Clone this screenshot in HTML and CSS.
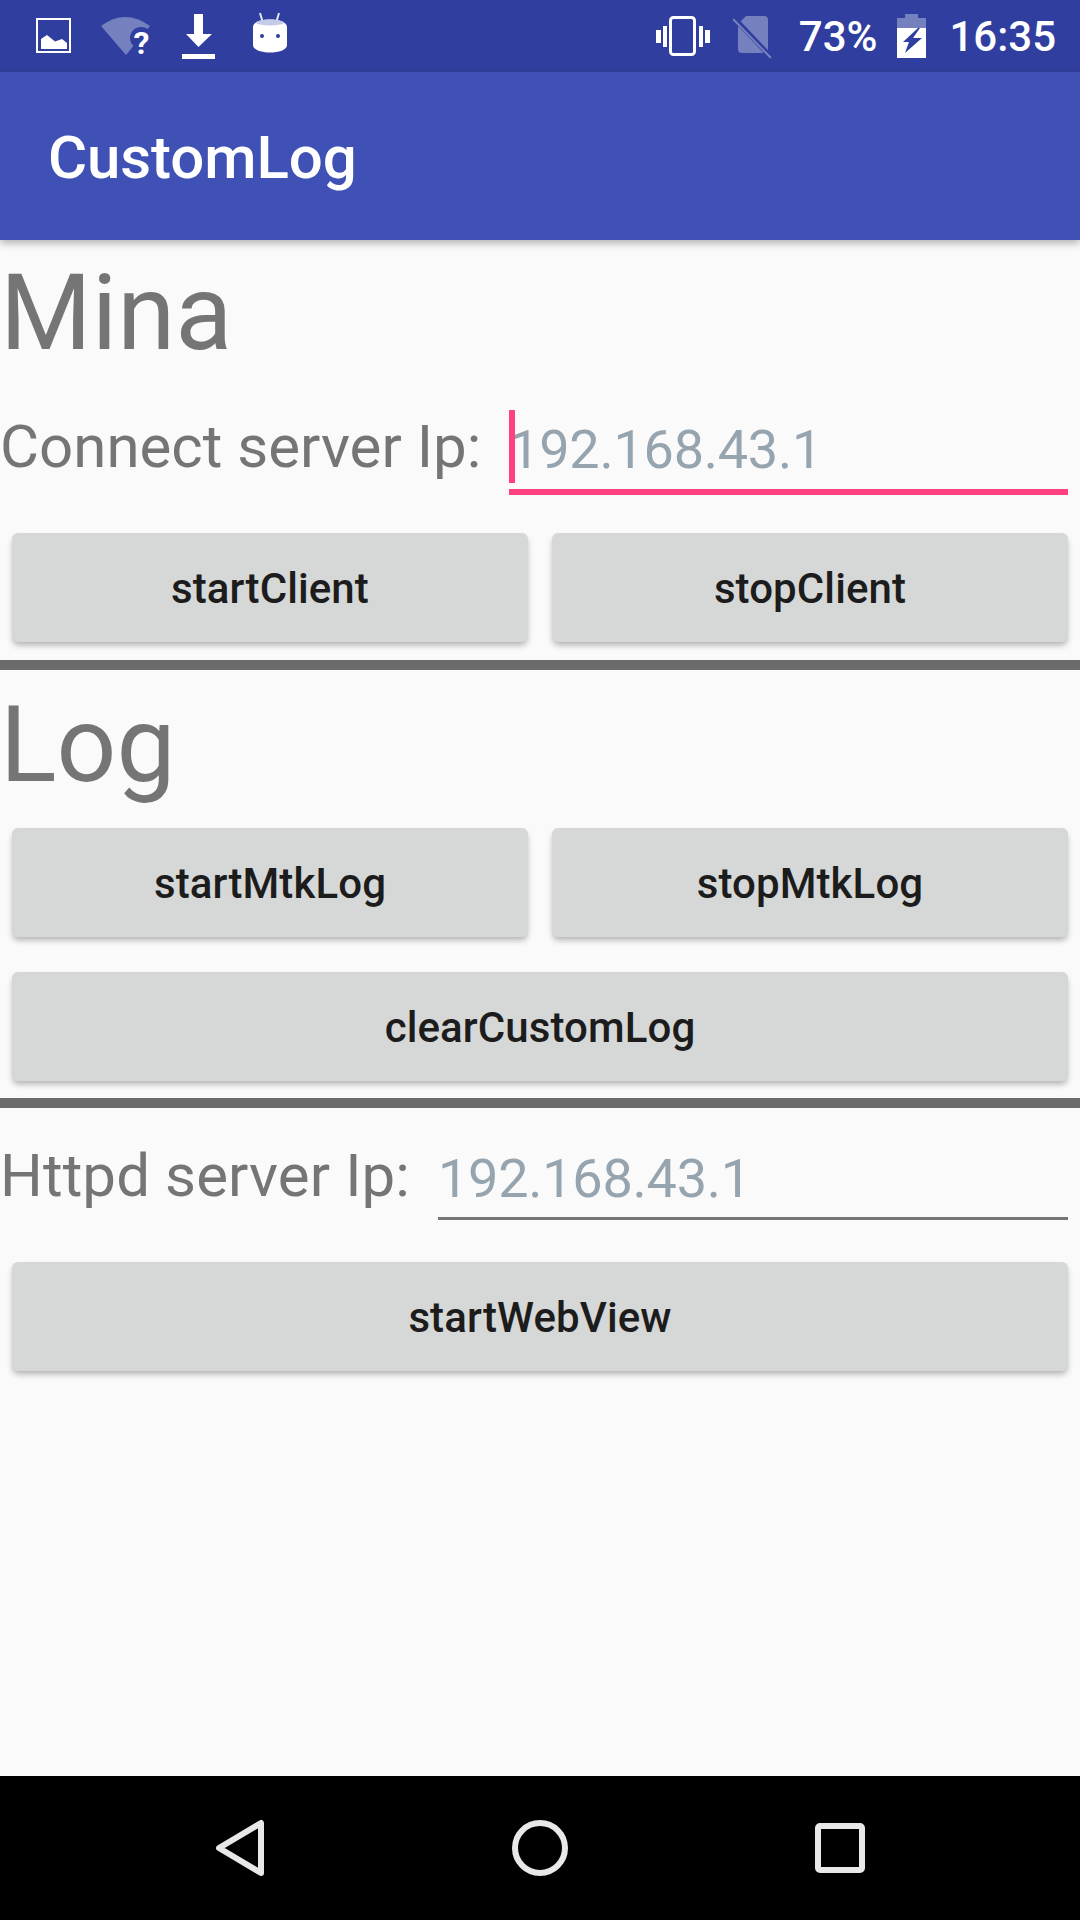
FILE: index.html
```html
<!DOCTYPE html>
<html>
<head>
<meta charset="utf-8">
<title>CustomLog</title>
<link rel="stylesheet" href="styles.css">
</head>
<body>
<div class="screen">

  <div class="statusbar">
    <div class="status-left">
      <svg class="tile" viewBox="0 0 72 72">
        <rect x="19" y="19" width="33" height="33" fill="none" stroke="#fff" stroke-width="2"/>
        <path d="M23 49V39L29 35L37 41.5L44 39L49 43V49Z" fill="#fff"/>
      </svg>
      <svg class="tile" viewBox="0 0 72 72">
        <path d="M11 26Q35 8 60 26L36 55Z" fill="#7580be"/>
        <circle cx="51" cy="38" r="11" fill="#303f9f"/>
        <rect x="48" y="38" width="20" height="20" fill="#303f9f"/>
        <text class="wifi-q" x="43.5" y="54">?</text>
      </svg>
      <svg class="tile" viewBox="0 0 72 72">
        <path d="M32 14H41V34H50L36.500 47L24 34H32Z" fill="#fff"/>
        <rect x="20" y="54" width="33" height="5" fill="#fff"/>
      </svg>
      <svg class="tile" viewBox="0 0 72 72">
        <path d="M26 13L29 23M45 13L42 23" stroke="#e3e5f3" stroke-width="2" fill="none"/>
        <path d="M19 27C19 17 53 17 53 27V45C53 55 19 55 19 45Z" fill="#fff"/>
        <ellipse cx="36" cy="22.500" rx="14" ry="3" fill="#c5cae9"/>
        <circle cx="28" cy="36" r="2" fill="#303f9f"/>
        <circle cx="44" cy="36" r="2" fill="#303f9f"/>
      </svg>
    </div>
    <div class="status-right">
      <svg class="icon-vibrate" viewBox="0 0 54 72">
        <rect x="14.500" y="17.500" width="24" height="37" rx="3" fill="none" stroke="#fff" stroke-width="3"/>
        <path d="M0 30H5V43H0ZM7 26H11V47H7ZM43 26H47V47H43ZM49 30H54V43H49Z" fill="#fff"/>
      </svg>
      <svg class="icon-sim" viewBox="0 0 40 72">
        <path d="M5 24L13 16H31Q35 16 35 20V53H9Q5 53 5 49Z" fill="#7580be"/>
        <path d="M0 17L38 57" stroke="#303f9f" stroke-width="5"/>
        <path d="M0 19L38 58" stroke="#7580be" stroke-width="2"/>
      </svg>
      <span class="percent">73%</span>
      <svg class="icon-battery" viewBox="0 0 29 72">
        <path d="M8 14H21V18H29V58H0V18H8Z" fill="#7580be"/>
        <path d="M0 28H29V58H0Z" fill="#fff"/>
        <path d="M21 28L6 42H12L8 53L25 38H16L23 28Z" fill="#303f9f"/>
      </svg>
      <span class="clock">16:35</span>
    </div>
  </div>

  <div class="appbar">CustomLog</div>

  <div class="content">
    <div class="section-title title-mina">Mina</div>
    <div class="ip-row connect-row">
      <span class="ip-label">Connect server Ip:</span>
      <div class="ip-edit focused"><span class="caret"></span>192.168.43.1</div>
    </div>
    <div class="btn-row">
      <div class="btn">startClient</div>
      <div class="btn">stopClient</div>
    </div>
    <div class="divider"></div>

    <div class="section-title title-log">Log</div>
    <div class="btn-row">
      <div class="btn">startMtkLog</div>
      <div class="btn">stopMtkLog</div>
    </div>
    <div class="btn-row next-row">
      <div class="btn">clearCustomLog</div>
    </div>
    <div class="divider divider-tight"></div>

    <div class="ip-row httpd-row">
      <span class="ip-label">Httpd server Ip:</span>
      <div class="ip-edit">192.168.43.1</div>
    </div>
    <div class="btn-row">
      <div class="btn">startWebView</div>
    </div>
  </div>

  <div class="navbar">
    <svg class="tile" viewBox="0 0 72 72">
      <path d="M57 11V61L15 36Z" fill="none" stroke="#e8e8e8" stroke-width="6" stroke-linejoin="round"/>
    </svg>
    <svg class="tile" viewBox="0 0 72 72">
      <circle cx="36" cy="36" r="25" fill="none" stroke="#e8e8e8" stroke-width="6"/>
    </svg>
    <svg class="tile" viewBox="0 0 72 72">
      <rect x="14" y="14" width="44" height="44" rx="2" fill="none" stroke="#e8e8e8" stroke-width="6"/>
    </svg>
  </div>

</div>
</body>
</html>
```

FILE: styles.css
```css
html, body {
  margin: 0;
  padding: 0;
}

body {
  font-family: Roboto, "Liberation Sans", sans-serif;
  background-color: #fafafa;
}

.screen {
  width: 1080px;
  height: 1920px;
  display: flex;
  flex-direction: column;
  overflow: hidden;
}

.tile {
  width: 72px;
  height: 72px;
  flex: none;
}

/* Status bar */
.statusbar {
  height: 72px;
  flex: none;
  display: flex;
  justify-content: space-between;
  background-color: #303f9f;
  padding: 0 24px 0 18px;
  box-sizing: border-box;
}

.status-left, .status-right {
  display: flex;
  align-items: center;
}

.icon-vibrate {
  width: 54px;
  height: 72px;
  margin-right: 23px;
}

.icon-sim {
  width: 40px;
  height: 72px;
  margin-right: 26px;
}

.icon-battery {
  width: 29px;
  height: 72px;
  margin: 0 23px 0 20px;
}

.percent, .clock {
  color: #fff;
  font-size: 42px;
  font-weight: 500;
}

.wifi-q {
  fill: #fff;
  font-size: 32px;
  font-weight: 700;
}

/* App bar */
.appbar {
  height: 168px;
  flex: none;
  display: flex;
  align-items: center;
  padding: 2px 0 0 48px;
  box-sizing: border-box;
  background-color: #3f51b5;
  color: #fff;
  font-size: 60px;
  font-weight: 500;
  letter-spacing: -0.1px;
  box-shadow: 0 3px 8px rgba(0, 0, 0, 0.3);
  position: relative;
}

/* Content */
.content {
  flex: 1;
  display: flex;
  flex-direction: column;
}

.section-title {
  color: #757575;
  font-size: 105px;
  line-height: 126px;
}

.title-mina {
  padding-top: 11px;
}

.title-log {
  padding-top: 13px;
  margin-bottom: 19px;
}

.ip-row {
  display: flex;
  padding-right: 12px;
  align-items: flex-start;
}

.connect-row {
  height: 140px;
  margin-top: 16px;
}

.httpd-row {
  height: 140px;
  margin-top: 14px;
}

.ip-label {
  color: #757575;
  font-size: 60px;
  line-height: 70px;
  padding-top: 19px;
  margin-right: 28px;
  white-space: nowrap;
}

.httpd-row .ip-label {
  letter-spacing: 0.1px;
}

.ip-edit {
  flex: 1;
  position: relative;
  box-sizing: border-box;
  height: 98px;
  color: #95a4ae;
  font-size: 54px;
  letter-spacing: -0.25px;
  line-height: 63px;
  padding-top: 25px;
  border-bottom: 3px solid #757575;
}

.ip-edit.focused {
  height: 102px;
  border-bottom: 6px solid #ff4081;
}

.caret {
  position: absolute;
  left: 0;
  top: 17px;
  width: 6px;
  height: 73px;
  background-color: #ff4081;
}

.btn-row {
  display: flex;
  gap: 24px;
  padding: 0 12px;
}

.next-row {
  margin-top: 35px;
}

.btn {
  flex: 1;
  height: 109px;
  display: flex;
  align-items: center;
  justify-content: center;
  box-sizing: border-box;
  padding-top: 2px;
  background-color: #d6d7d7;
  color: #1c1c1c;
  font-size: 42px;
  font-weight: 500;
  letter-spacing: 0.1px;
  border-radius: 6px;
  box-shadow: 0 4px 6px -1px rgba(0, 0, 0, 0.3);
}

.divider {
  height: 10px;
  flex: none;
  background-color: #6b6b6b;
  margin-top: 18px;
}

.divider-tight {
  margin-top: 17px;
}

/* Navigation bar */
.navbar {
  height: 144px;
  flex: none;
  display: flex;
  justify-content: space-between;
  align-items: center;
  padding: 0 204px;
  background-color: #000;
}
```
